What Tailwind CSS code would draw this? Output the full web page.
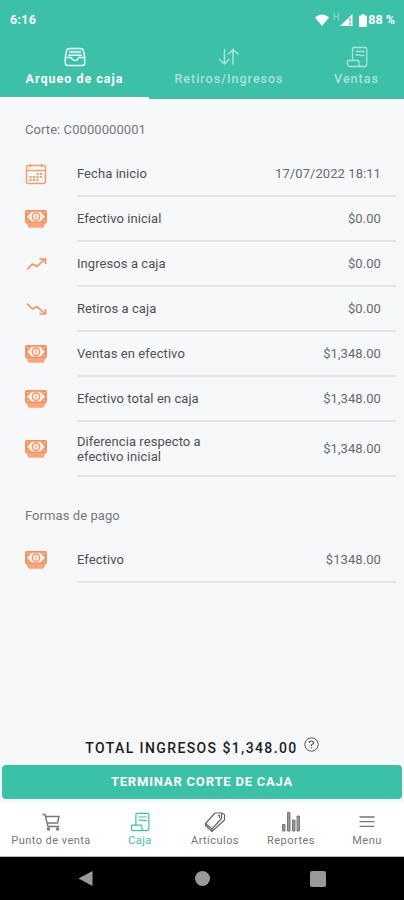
<!DOCTYPE html>
<html lang="es">
<head>
<meta charset="utf-8">
<meta name="viewport" content="width=device-width, initial-scale=1">
<title>Arqueo de caja</title>
<script src="https://cdn.jsdelivr.net/npm/@tailwindcss/browser@4"></script>
</head>
<body class="w-[404px] h-[900px] overflow-hidden bg-[#f7f8fa] font-[Roboto,sans-serif] text-[13px] flex flex-col">
<svg class="hidden">
  <symbol id="cash" viewBox="0 0 22 18">
    <rect x="0" y="0" width="22" height="13.500" rx="2" fill="#fb915f"/>
    <path d="M2 6.700 6.500 1.800h9L20 6.700l-4.500 4.900h-9z" fill="#fff3ec"/>
    <path d="M1.800 2.500h1.500M18.700 2.500h1.500M1.800 11h1.500M18.700 11h1.500" stroke="#fff3ec" stroke-width="1.200"/>
    <circle cx="11" cy="6.700" r="3.700" fill="none" stroke="#fb915f" stroke-width="1.300"/>
    <path d="M11 5.200v3" stroke="#fb915f" stroke-width="1"/>
    <path d="M1.500 13h19L19 17q-.4.800-1.300.8H4.300Q3.400 17.800 3 17z" fill="#fba57c"/>
  </symbol>
  <symbol id="receipt" viewBox="0 0 22 22">
    <g fill="none" stroke="currentColor" stroke-width="1.300" stroke-linejoin="round" stroke-linecap="round">
      <path d="M6.500 14V2.500Q6.500 1.500 7.500 1.500h12Q20.800 1.500 20.800 2.800V18q0 2.500-2.500 2.500H4Q1.500 20.500 1.500 18V15.500q0-1 1-1H12q1 0 1 1V18q0 2.500 2.500 2.500"/>
      <path d="M10 5.500h8M10 9h3.500M14.500 9.500H18"/>
    </g>
  </symbol>
</svg>

<header class="h-[99px] shrink-0 bg-[#3dc0a8] text-white flex flex-col">
  <div class="h-[40px] flex items-center justify-between pl-[10px] pr-[9px] text-[12.500px] font-bold">
    <span class="tracking-[0.3px]">6:16</span>
    <div class="flex items-center">
      <svg class="w-[14px] h-[12px]" viewBox="0 0 14 12"><path d="M0 3.500Q7-2.300 14 3.500L7 12z" fill="#fff"/></svg>
      <span class="text-[9px] font-normal opacity-50 ml-[4px] mb-[5px]">H</span>
      <svg class="w-[13px] h-[12px] ml-[1px]" viewBox="0 0 13 12"><path d="M0 12 12.500 0v12z" fill="#fff"/><path d="M10 4v8" stroke="#3dc0a8" stroke-width="1.300" stroke-dasharray="3 1"/></svg>
      <svg class="w-[8px] h-[13px] ml-[6px]" viewBox="0 0 8 13"><path d="M0 2.500Q0 1.500 1 1.500h1.500V0h3v1.500H7q1 0 1 1V12q0 1-1 1H1q-1 0-1-1z" fill="#fff"/></svg>
      <span class="ml-[1px]">88 %</span>
    </div>
  </div>
  <nav class="flex-1 grid grid-cols-[149px_160px_95px] text-[12.500px] font-bold tracking-[1px] leading-[16px]">
    <div class="flex flex-col items-center pt-[7px] border-b-2 border-white">
      <svg class="w-[22px] h-[20px]" viewBox="0 0 22 20" fill="none" stroke="#e9fffa" stroke-width="1.500" stroke-linejoin="round"><path d="M1.300 10 2.500 4Q3 1.500 5.500 1.500h11Q19 1.500 19.500 4l1.200 6v6q0 2.500-2.500 2.500H3.800q-2.500 0-2.500-2.500zM1.300 10.500h6.200q.5 3 3.500 3t3.500-3h6.200M4 8.300h14"/><path d="M5 5h12" stroke-width="2.500" opacity=".7"/></svg>
      <span class="mt-[4px]">Arqueo de caja</span>
    </div>
    <div class="flex flex-col items-center pt-[7px] text-[#a9e4d9]">
      <svg class="w-[22px] h-[20px]" viewBox="0 0 22 20" fill="none" stroke="currentColor" stroke-width="1.500" stroke-linecap="round" stroke-linejoin="round"><path d="M6.500 2.500V17M1.500 12.500l5 4.500 4.500-4.500M15 17V2.500M10.500 7 15 2.500 20 7"/></svg>
      <span class="mt-[4px] font-medium">Retiros/Ingresos</span>
    </div>
    <div class="flex flex-col items-center pt-[6px] text-[#a9e4d9]">
      <svg class="w-[22px] h-[22px]"><use href="#receipt"/></svg>
      <span class="mt-[3px] font-medium">Ventas</span>
    </div>
  </nav>
</header>

<main class="flex-1 flex flex-col pl-[25px] pr-[8px] text-[#6a6a6a] tracking-[0.070px]">
  <h2 class="mt-[23px] h-[16px] leading-[16px] text-[#777]">Corte: C0000000001</h2>
  <ul class="mt-[14px] leading-[15px]">
    <li class="flex h-[45px]"><span class="w-[52px] pt-[11px]"><svg class="w-[22px] h-[22px]" viewBox="0 0 22 22" fill="none" stroke="#fb9a6c"><rect x="1.500" y="2.500" width="19" height="18" rx="2" stroke-width="1.500"/><path d="M2 7.500h18" stroke-width="1.400"/><path d="M5.500 1v3M16.500 1v3" stroke-width="1.600"/><path d="M11.500 11h6M4.500 14h13M4.500 17h10" stroke-width="1.800" stroke-dasharray="2.200 1.200"/></svg></span><div class="flex-1 flex items-center justify-between border-b-2 border-[#e2e3e5] pr-[15px]"><span class="text-[#505050]">Fecha inicio</span><span>17/07/2022 18:11</span></div></li>
    <li class="flex h-[45px]"><span class="w-[52px] pt-[13px]"><svg class="w-[22px] h-[18px]"><use href="#cash"/></svg></span><div class="flex-1 flex items-center justify-between border-b-2 border-[#e2e3e5] pr-[15px]"><span class="text-[#505050]">Efectivo inicial</span><span>$0.00</span></div></li>
    <li class="flex h-[45px]"><span class="w-[52px] pt-[15px]"><svg class="w-[22px] h-[14px]" viewBox="0 0 22 14" fill="none" stroke="#fb915f" stroke-width="1.700"><path d="M2 12.500 7.500 7l4.500 2.500 7.500-7M14.500 2h6v5"/></svg></span><div class="flex-1 flex items-center justify-between border-b-2 border-[#e2e3e5] pr-[15px]"><span class="text-[#505050]">Ingresos a caja</span><span>$0.00</span></div></li>
    <li class="flex h-[45px]"><span class="w-[52px] pt-[15px]"><svg class="w-[22px] h-[14px]" viewBox="0 0 22 14" fill="none" stroke="#fb915f" stroke-width="1.700"><path d="M2 1.500 7.500 7l4.500-2.500 7.500 7M14.500 12h6V7"/></svg></span><div class="flex-1 flex items-center justify-between border-b-2 border-[#e2e3e5] pr-[15px]"><span class="text-[#505050]">Retiros a caja</span><span>$0.00</span></div></li>
    <li class="flex h-[45px]"><span class="w-[52px] pt-[13px]"><svg class="w-[22px] h-[18px]"><use href="#cash"/></svg></span><div class="flex-1 flex items-center justify-between border-b-2 border-[#e2e3e5] pr-[15px]"><span class="text-[#505050]">Ventas en efectivo</span><span>$1,348.00</span></div></li>
    <li class="flex h-[45px]"><span class="w-[52px] pt-[13px]"><svg class="w-[22px] h-[18px]"><use href="#cash"/></svg></span><div class="flex-1 flex items-center justify-between border-b-2 border-[#e2e3e5] pr-[15px]"><span class="text-[#505050]">Efectivo total en caja</span><span>$1,348.00</span></div></li>
    <li class="flex h-[55px]"><span class="w-[52px] pt-[18px]"><svg class="w-[22px] h-[18px]"><use href="#cash"/></svg></span><div class="flex-1 flex items-center justify-between border-b-2 border-[#e2e3e5] pr-[15px]"><span class="text-[#505050]">Diferencia respecto a<br>efectivo inicial</span><span>$1,348.00</span></div></li>
  </ul>
  <h2 class="mt-[31px] h-[16px] leading-[16px] text-[#777]">Formas de pago</h2>
  <ul class="mt-[13px] leading-[15px]">
    <li class="flex h-[46px]"><span class="w-[52px] pt-[14px]"><svg class="w-[22px] h-[18px]"><use href="#cash"/></svg></span><div class="flex-1 flex items-center justify-between border-b-2 border-[#e2e3e5] pr-[15px]"><span class="text-[#505050]">Efectivo</span><span>$1348.00</span></div></li>
  </ul>
</main>

<section class="shrink-0 px-[2px]">
  <div class="flex justify-center h-[26px] text-[#1c1c1c] font-medium text-[14px] tracking-[1.400px] leading-[19px]">
    <span>TOTAL INGRESOS $1,348.00</span>
    <svg class="w-[15px] h-[15px] ml-[6px] -mt-[2px]" viewBox="0 0 15 15" fill="none" stroke="#555"><circle cx="7.500" cy="7.500" r="6.700"/><path d="M5.500 6q0-2 2-2t2 1.800q0 1.200-2 2V9M7.500 10.200v1.200" stroke-width="1.200"/></svg>
  </div>
  <div class="h-[34px] rounded-[4px] bg-[#3bc1a7] text-white flex items-center justify-center font-bold text-[13px] tracking-[0.800px]">TERMINAR CORTE DE CAJA</div>
</section>

<nav class="shrink-0 mt-[4px] h-[54px] bg-white border-b border-[#bbb] grid grid-cols-[102px_76px_74px_78px_74px] text-[11px] tracking-[0.450px] leading-[14px] text-[#777]">
  <div class="flex flex-col items-center pt-[8px]"><svg class="w-[22px] h-[22px]" viewBox="0 0 22 22" fill="none" stroke="#777" stroke-width="1.400"><path d="M2.500 3.500H5L8 15.500h11M5.500 5.500H19l-1.500 6.500H7.200"/><circle cx="8.500" cy="18" r="1"/><circle cx="17.500" cy="18" r="1"/></svg><span class="mt-[1px]">Punto de venta</span></div>
  <div class="flex flex-col items-center pt-[8px] text-[#3bc1a7]"><svg class="w-[22px] h-[22px] p-[1px]"><use href="#receipt"/></svg><span class="mt-[1px]">Caja</span></div>
  <div class="flex flex-col items-center pt-[8px]"><svg class="w-[22px] h-[22px]" viewBox="0 0 22 22" fill="none" stroke="#666" stroke-width="1.200" stroke-linejoin="round"><path d="M1.500 12.500 11 2h6.500v5.500L8 18zM1.500 12.500v2L8 20.500 20.500 9V3.500L17.500 2M8 18v2.500M14 4.500h1.500v2.500"/></svg><span class="mt-[1px]">Artículos</span></div>
  <div class="flex flex-col items-center pt-[8px]"><svg class="w-[22px] h-[22px]" viewBox="0 0 22 22" fill="#999" stroke="#666" stroke-width=".8"><path d="M2.500 13.500h2.500v6.500H2.500zM7.500 1.500H10V20H7.500zM12.500 9H15v11h-2.500zM17 5h2.500v15H17z"/></svg><span class="mt-[1px]">Reportes</span></div>
  <div class="flex flex-col items-center pt-[8px]"><svg class="w-[22px] h-[22px]" viewBox="0 0 22 22" stroke="#777" stroke-width="1.300"><path d="M3.500 6h15M3.500 10.700h15M3.500 15.300h15"/></svg><span class="mt-[1px]">Menu</span></div>
</nav>
<footer class="shrink-0 h-[43px] bg-black flex items-center text-[#999] pl-[78px]">
  <svg class="w-[15px] h-[17px]" viewBox="0 0 15 17"><path d="M.5 8.500 14.500 1v15z" fill="currentColor"/></svg>
  <span class="w-[15px] h-[15px] rounded-full bg-[#999] ml-[102px]"></span>
  <span class="w-[16px] h-[16px] rounded-[2px] bg-[#999] ml-[100px]"></span>
</footer>
</body>
</html>
